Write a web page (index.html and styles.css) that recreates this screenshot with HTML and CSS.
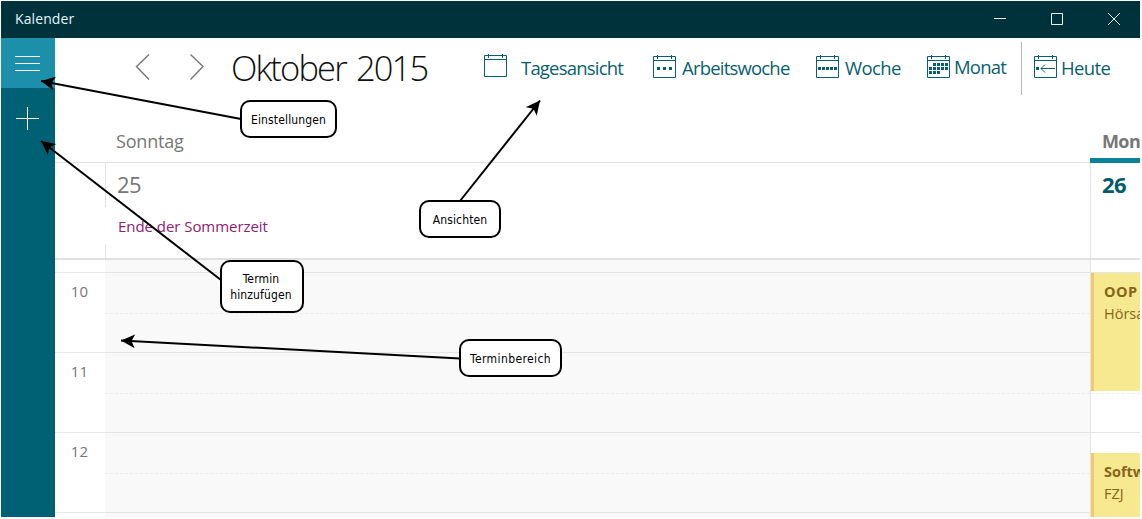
FILE: index.html
```html
<!DOCTYPE html>
<html lang="de">
<head>
<meta charset="utf-8">
<title>Kalender</title>
<link rel="stylesheet" href="styles.css">
</head>
<body>
<div class="app">
  <header class="titlebar">
    <span class="app-name">Kalender</span>
    <div class="window-controls">
      <svg width="12" height="12" viewBox="0 0 12 12"><path d="M0 5.5H12"/></svg>
      <svg width="12" height="12" viewBox="0 0 12 12"><path d="M.5 .5H11.5V11.5H.5Z"/></svg>
      <svg width="12" height="12" viewBox="0 0 12 12"><path d="M0 0L12 12M12 0L0 12"/></svg>
    </div>
  </header>
  <div class="body">
    <nav class="sidebar">
      <div class="side-button active"><svg width="26" height="24" viewBox="0 0 26 24"><path d="M0 5.5H25M0 12.5H25M0 19.5H25"/></svg></div>
      <div class="side-button"><svg width="24" height="24" viewBox="0 0 24 24"><path d="M0 11.5H23M11.5 0V23"/></svg></div>
    </nav>
    <main class="main">
      <div class="toolbar">
        <svg class="chevron" width="16" height="28" viewBox="0 0 16 28"><path d="M14 .5L1.5 12.5L14 25.5"/></svg>
        <svg class="chevron next" width="16" height="28" viewBox="0 0 16 28"><path d="M1.5 .5L14 12.5L1.5 25.5"/></svg>
        <h1 class="month">Oktober 2015</h1>
        <div class="view view-day">
          <svg class="raised" width="24" height="24" viewBox="0 0 24 24"><path d="M.5 1.5H22.5V22.5H.5ZM.5 5.5H22.5M4.5 0V4M18.5 0V4"/></svg><span>Tagesansicht</span>
        </div>
        <div class="view view-workweek">
          <svg width="24" height="24" viewBox="0 0 24 24"><path d="M.5 1.5H22.5V22.5H.5ZM.5 5.5H22.5M4.5 0V4M18.5 0V4"/><path class="dots" d="M4 12h3v3h-3zM10 12h3v3h-3zM16 12h3v3h-3z"/></svg><span>Arbeitswoche</span>
        </div>
        <div class="view view-week">
          <svg width="24" height="24" viewBox="0 0 24 24"><path d="M.5 1.5H22.5V22.5H.5ZM.5 5.5H22.5M4.5 0V4M18.5 0V4"/><path class="dots" d="M2 12h3v3h-3zM6 12h3v3h-3zM10 12h3v3h-3zM14 12h3v3h-3zM18 12h3v3h-3z"/></svg><span>Woche</span>
        </div>
        <div class="view view-month">
          <svg width="24" height="24" viewBox="0 0 24 24"><path d="M.5 1.5H22.5V22.5H.5ZM.5 5.5H22.5M4.5 0V4M18.5 0V4"/><path class="dots" d="M6 8h3v3h-3zM10 8h3v3h-3zM14 8h3v3h-3zM18 8h3v3h-3zM2 12h3v3h-3zM6 12h3v3h-3zM10 12h3v3h-3zM14 12h3v3h-3zM18 12h3v3h-3zM2 16h3v3h-3zM6 16h3v3h-3zM10 16h3v3h-3z"/></svg><span>Monat</span>
        </div>
        <div class="view view-today">
          <svg width="24" height="24" viewBox="0 0 24 24"><path d="M.5 1.5H22.5V22.5H.5ZM.5 5.5H22.5M4.5 0V4M18.5 0V4"/><path class="dots" d="M2 12h3v3h-3z"/><path d="M21 13.5H7M11 9.5L7 13.5L11 17.5"/></svg><span>Heute</span>
        </div>
      </div>
      <div class="day-names">
        <div class="day-name">Sonntag</div>
        <div class="day-name today">Montag</div>
      </div>
      <div class="all-day">
        <div class="gutter"></div>
        <div class="all-day-cell sunday">
          <div class="date">25</div>
          <div class="all-day-event">Ende der Sommerzeit</div>
        </div>
        <div class="all-day-cell monday"><div class="date">26</div></div>
      </div>
      <div class="schedule">
        <div class="hours">
          <div class="lead"></div>
          <div class="hour">10</div><div class="hour">11</div><div class="hour">12</div><div class="hour"></div>
        </div>
        <div class="slots sunday-slots">
          <div class="lead"></div>
          <div class="slot"></div><div class="slot"></div><div class="slot"></div><div class="slot"></div>
        </div>
        <div class="slots monday-slots">
          <div class="lead"></div>
          <div class="slot"></div><div class="slot"></div><div class="slot"></div><div class="slot"></div>
          <div class="event event-oop"><b>OOP</b><span>Hörsaal</span></div>
          <div class="event event-software"><b>Software</b><span>FZJ</span></div>
        </div>
      </div>
    </main>
  </div>
</div>
<svg class="arrows" width="1142" height="519" viewBox="0 0 1142 519">
  <defs>
    <marker id="head" markerUnits="userSpaceOnUse" markerWidth="16" markerHeight="16" refX="14" refY="7" orient="auto"><path d="M14 7L0 14L3.5 7L0 0Z"/></marker>
  </defs>
  <path d="M241 119L41 81"/>
  <path d="M221 280L41 141"/>
  <path d="M460 201L540 100.500"/>
  <path d="M460 358.500L121 340.500"/>
</svg>
<div class="callout callout-settings"><span>Einstellungen</span></div>
<div class="callout callout-add"><span>Termin<br>hinzufügen</span></div>
<div class="callout callout-views"><span>Ansichten</span></div>
<div class="callout callout-area"><span>Terminbereich</span></div>
</body>
</html>
```
FILE: styles.css
```css
* { box-sizing: border-box; }
body {
  margin: 0;
  padding: 1px 2px 2px 1px;
  width: 1142px;
  height: 519px;
  overflow: hidden;
  background: #fff;
  font-family: "Open Sans", "Noto Sans", sans-serif;
}
svg { flex: none; fill: none; stroke: currentColor; stroke-width: 1; }
.app { display: flex; flex-direction: column; height: 516px; overflow: hidden; }
.titlebar {
  display: flex;
  flex: none;
  justify-content: space-between;
  align-items: center;
  height: 37px;
  padding: 0 20px 2px 14px;
  background: #00323c;
  color: #e4f4f7;
}
.app-name { font-size: 14px; letter-spacing: .1px; }
.window-controls { display: flex; gap: 45px; }
.body { display: flex; flex: 1; min-height: 0; }
.sidebar { flex: none; width: 54px; background: #006175; color: #fff; }
.side-button { display: flex; align-items: center; height: 50px; padding-left: 14px; }
.side-button + .side-button { height: 62px; padding-left: 15px; }
.side-button.active { background: #1c90aa; }
.main { display: flex; flex: 1; flex-direction: column; min-width: 0; }
.toolbar { display: flex; flex: none; align-items: center; height: 59px; padding-left: 80px; color: #085f6e; }
.chevron { color: #777; stroke-width: 1.4; }
.next { margin-left: 38px; }
.month { flex: none; width: 253px; margin: 0 0 0 26px; color: #111; font-size: 34.5px; font-weight: 300; line-height: 50px; letter-spacing: -1.85px; word-spacing: 3px; white-space: nowrap; }
.view { display: flex; flex: none; align-items: center; height: 53px; font-size: 18.5px; letter-spacing: -.8px; white-space: nowrap; }
.view span { margin: -1px 0 0 5px; }
.view svg { margin-top: -1px; }
.dots { fill: currentColor; stroke: none; }
.view-day { width: 169px; }
.view-day span { margin-left: 13px; }
.view .raised { margin-top: -4px; }
.view-workweek { width: 163px; }
.view-week { width: 111px; }
.view-week span, .view-today span { letter-spacing: -.6px; }
.view-month { width: 95px; margin-top: 1px; border-right: 1px solid #b5b5b5; }
.view-month svg { margin-top: -3px; }
.view-month span { margin: -3px 0 0 3px; }
.view-today { padding-left: 12px; }
.view-today span { margin-left: 3px; }
.day-names { display: flex; flex: none; height: 66px; padding-left: 50px; color: #777; font-size: 18px; line-height: 25px; letter-spacing: -.2px; border-bottom: 1px solid #e3e3e3; }
.day-name { width: 985px; padding: 32px 0 0 11px; }
.day-name.today { flex: none; width: 50px; height: 66px; padding-left: 12px; overflow: hidden; border-bottom: 5px solid #0b829a; font-weight: 700; letter-spacing: -.6px; }
.all-day { display: flex; flex: none; height: 97px; border-bottom: 2px solid #e0e0e0; }
.gutter { flex: none; width: 50px; }
.all-day-cell { padding-left: 12px; }
.all-day-cell.sunday {
  width: 985px;
  background: linear-gradient(#e3e3e3 0 44px, transparent 44px 81px, #e3e3e3 81px) left / 1px 100% no-repeat;
}
.all-day-cell.monday { width: 50px; padding-left: 11px; border-left: 1px solid #e3e3e3; }
.date { height: 49px; padding-top: 7px; color: #777; font-size: 22px; line-height: 28px; letter-spacing: -.6px; }
.monday .date { color: #005b6c; font-weight: 700; }
.all-day-event { padding-left: 1px; color: #902070; font-size: 15px; line-height: 28px; letter-spacing: -.05px; }
.schedule { display: flex; flex: 1; min-height: 0; overflow: hidden; }
.hours { flex: none; width: 50px; color: #777; font-size: 15px; }
.lead { height: 12px; }
.hour { height: 80px; padding: 7px 17px 0 0; border-top: 1px solid #e8e8e8; line-height: 22px; text-align: right; }
.sunday-slots { width: 985px; background: #f9f9f9; }
.slot { height: 80px; border-top: 1px solid #e5e5e5; }
.slot::before { content: ""; display: block; height: 40px; border-bottom: 1px dashed #ececec; }
.monday-slots { position: relative; width: 50px; overflow: hidden; border-left: 1px solid #e3e3e3; }
.event { position: absolute; left: 0; right: 0; display: flex; flex-direction: column; padding: 8px 0 0 10px; border-left: 3px solid #f4c96c; background: #f7e98f; color: #86651b; font-size: 14.5px; line-height: 22px; white-space: nowrap; }
.event b { font-weight: 700; }
.event-oop { top: 13px; height: 118px; }
.event-oop b { letter-spacing: .5px; }
.event-software { top: 193px; height: 90px; }
.arrows { position: absolute; top: 0; left: 0; color: #000; stroke-width: 2; }
.arrows > path { marker-end: url(#head); }
.arrows marker path { fill: #000; stroke: none; }
.callout { position: absolute; display: flex; align-items: center; justify-content: center; border: 2px solid #000; border-radius: 10px; background: #fff; color: #000; font-family: "DejaVu Sans Condensed", "DejaVu Sans", sans-serif; font-size: 12px; line-height: 16px; letter-spacing: .15px; text-align: center; }
.callout span { padding: 1px 0 0 0; }
.callout-settings { left: 240px; top: 100px; width: 97px; height: 38px; }
.callout-add { left: 220px; top: 260px; width: 84px; height: 53px; }
.callout-add span { padding: 0 2px 0 0; }
.callout-views { left: 419px; top: 200px; width: 82px; height: 38px; }
.callout-area { left: 459px; top: 339px; width: 103px; height: 38px; letter-spacing: .4px; }
```
